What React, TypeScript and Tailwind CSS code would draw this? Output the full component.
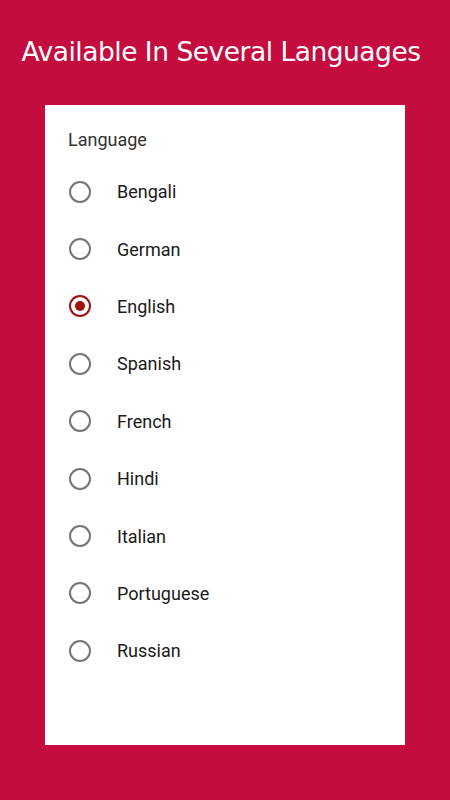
import { useState } from "react";

const languages = [
  "Bengali",
  "German",
  "English",
  "Spanish",
  "French",
  "Hindi",
  "Italian",
  "Portuguese",
  "Russian",
];

function Radio({ checked }: { checked: boolean }) {
  return (
    <span
      className={`flex h-[22px] w-[22px] items-center justify-center rounded-full border-2 ${
        checked ? "border-[#a30f0f]" : "border-[#757575]"
      }`}
    >
      {checked && <span className="h-[10px] w-[10px] rounded-full bg-[#a30f0f]" />}
    </span>
  );
}

export default function App() {
  const [selected, setSelected] = useState("English");

  return (
    <div className="flex h-[800px] w-full flex-col items-center bg-[#c50c3e]">
      <h1 className="mt-[33px] h-[37px] pr-[8px] text-[26.5px] leading-[37px] tracking-[-0.5px] text-white [font-family:'DejaVu_Sans',sans-serif]">
        Available In Several Languages
      </h1>
      <div className="mt-[35px] flex h-[640px] w-[360px] flex-col bg-white pt-[23px] [font-family:Roboto,sans-serif]">
        <p className="pl-[23px] text-[18px] leading-[24px] text-[#333]">Language</p>
        <ul className="mt-[11px] flex flex-col">
          {languages.map((lang) => (
            <li key={lang}>
              <button
                onClick={() => setSelected(lang)}
                className="flex h-[57.4px] w-full items-center pl-[24px] text-left"
              >
                <Radio checked={selected === lang} />
                <span className="ml-[26px] text-[18px] text-[#1a1a1a]">{lang}</span>
              </button>
            </li>
          ))}
        </ul>
      </div>
    </div>
  );
}
